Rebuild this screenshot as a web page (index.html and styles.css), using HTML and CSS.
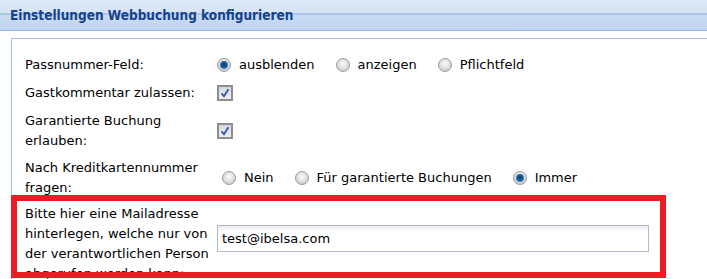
FILE: index.html
```html
<!DOCTYPE html>
<html lang="de">
<head>
    <meta charset="UTF-8">
    <title>Einstellungen Webbuchung konfigurieren</title>
    <link rel="stylesheet" href="styles.css">
</head>
<body>
    <div class="panel-header">Einstellungen Webbuchung konfigurieren</div>

    <div class="fieldset">
        <div class="form-row row-1">
            <div class="form-label">Passnummer-Feld:</div>
            <div class="radio-group">
                <label class="option"><span class="radio checked"></span>ausblenden</label>
                <label class="option"><span class="radio"></span>anzeigen</label>
                <label class="option"><span class="radio"></span>Pflichtfeld</label>
            </div>
        </div>

        <div class="form-row row-2">
            <div class="form-label">Gastkommentar zulassen:</div>
            <div><span class="checkbox"><svg width="14" height="14" viewBox="0 0 14 14"><polyline points="3,7.5 5.8,10.8 11,2.5" fill="none" stroke="#3a54b4" stroke-width="2.2"/></svg></span></div>
        </div>

        <div class="form-row row-3">
            <div class="form-label">Garantierte Buchung erlauben:</div>
            <div><span class="checkbox"><svg width="14" height="14" viewBox="0 0 14 14"><polyline points="3,7.5 5.8,10.8 11,2.5" fill="none" stroke="#3a54b4" stroke-width="2.2"/></svg></span></div>
        </div>

        <div class="form-row row-4">
            <div class="form-label">Nach Kreditkartennummer fragen:</div>
            <div class="radio-group shifted">
                <label class="option"><span class="radio"></span>Nein</label>
                <label class="option"><span class="radio"></span>Für garantierte Buchungen</label>
                <label class="option"><span class="radio checked"></span>Immer</label>
            </div>
        </div>

        <div class="form-row row-mail">
            <div class="form-label">Bitte hier eine Mailadresse hinterlegen, welche nur von der verantwortlichen Person abgerufen werden kann:</div>
            <input type="text" class="text-field" value="test@ibelsa.com">
        </div>
    </div>
</body>
</html>
```

FILE: styles.css
```css
body {
    margin: 0;
    font-family: "DejaVu Sans", Verdana, sans-serif;
    font-size: 13px;
    color: #000;
    background: #fff;
    overflow: hidden;
}
.panel-header {
    height: 30px;
    padding-left: 10px;
    line-height: 30px;
    font-family: "DejaVu Sans Condensed", "DejaVu Sans", sans-serif;
    font-weight: bold;
    font-size: 13.5px;
    color: #15428b;
    background: linear-gradient(#dfeaf7 0, #d4e3f5 13px, #aac6ea 13px, #aac6ea 15px, #c9dcf3 15px, #bfd4ef 30px);
    border-bottom: 1px solid #93b7e6;
}
.fieldset {
    margin: 7px 0 0 11px;
    padding: 16px 0 0 13px;
    border-top: 1px solid #a3c2ec;
    border-left: 1px solid #a3c2ec;
    height: 224px;
}
.form-row {
    display: grid;
    grid-template-columns: 192px auto;
    align-items: center;
    line-height: 20px;
    margin-bottom: 8px;
}
.row-3 {
    margin-bottom: 7px;
}
.row-4 {
    margin-bottom: 3px;
}
.radio-group {
    display: flex;
    align-items: center;
}
.radio-group.shifted {
    padding-left: 5px;
}
.option {
    display: flex;
    align-items: center;
    gap: 8px;
    margin-right: 21px;
}
.radio {
    position: relative;
    width: 14px;
    height: 14px;
    box-sizing: border-box;
    border-radius: 50%;
    border: 1px solid #9c9c9c;
    background: radial-gradient(circle at 50% 40%, #fbfbfb 0, #e2e2e2 45%, #bdbdbd 100%);
}
.radio.checked::after {
    content: "";
    position: absolute;
    left: 2px;
    top: 2px;
    width: 8px;
    height: 8px;
    border-radius: 50%;
    background: radial-gradient(circle at 50% 45%, #0c3462 0, #2462a6 50%, #6fb0e6 100%);
}
.checkbox {
    display: flex;
    align-items: center;
    justify-content: center;
    width: 16px;
    height: 16px;
    box-sizing: border-box;
    border: 2px solid #8d8d8d;
    background: linear-gradient(#d6d9df, #eceef2);
}
.row-mail {
    width: 643px;
    height: 71px;
    box-sizing: border-box;
    margin-left: -8px;
    padding: 3px 11px 0 8px;
    grid-template-columns: 192px 432px;
    align-items: start;
    outline: 6px solid #ed1c24;
}
.text-field {
    width: 432px;
    height: 27px;
    box-sizing: border-box;
    margin: 21px 0 0 0;
    padding: 0 4px;
    border: 1px solid #b5b8c8;
    background: linear-gradient(#e9ebee, #fff 6px);
    font-family: "DejaVu Sans", Verdana, sans-serif;
    font-size: 13px;
    color: #000;
    outline: none;
}
```
